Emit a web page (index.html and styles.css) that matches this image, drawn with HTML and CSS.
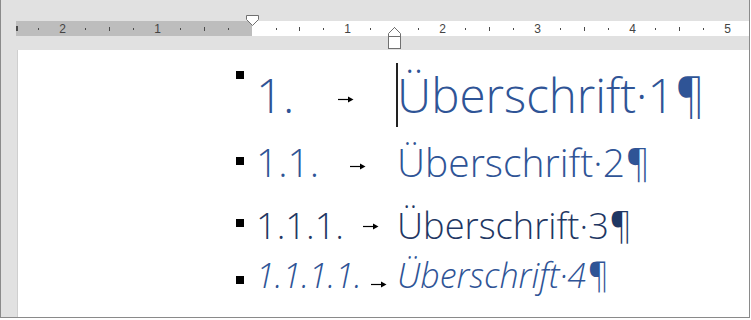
FILE: index.html
```html
<!DOCTYPE html>
<html lang="de">
<head>
<meta charset="UTF-8">
<title>Überschriften</title>
<link rel="stylesheet" href="styles.css">
</head>
<body>
<div class="window">
  <div class="topbar">
    <div class="ruler">
      <svg width="733" height="15" viewBox="0 0 733 15">
        <rect x="0" y="0" width="236" height="15" fill="#bdbdbd"/>
        <rect x="236" y="0" width="497" height="15" fill="#ffffff"/>
        <g fill="#4a4a4a">
          <rect x="0" y="5" width="2" height="5"/>
          <rect x="22" y="7" width="1" height="2"/>
          <rect x="69" y="7" width="1" height="2"/>
          <rect x="93" y="6" width="1" height="4"/>
          <rect x="117" y="7" width="1" height="2"/>
          <rect x="164" y="7" width="1" height="2"/>
          <rect x="188" y="6" width="1" height="4"/>
          <rect x="212" y="7" width="1" height="2"/>
          <rect x="260" y="7" width="1" height="2"/>
          <rect x="283" y="6" width="1" height="4"/>
          <rect x="307" y="7" width="1" height="2"/>
          <rect x="354" y="7" width="1" height="2"/>
          <rect x="378" y="6" width="1" height="4"/>
          <rect x="402" y="7" width="1" height="2"/>
          <rect x="449" y="7" width="1" height="2"/>
          <rect x="473" y="6" width="1" height="4"/>
          <rect x="497" y="7" width="1" height="2"/>
          <rect x="544" y="7" width="1" height="2"/>
          <rect x="568" y="6" width="1" height="4"/>
          <rect x="592" y="7" width="1" height="2"/>
          <rect x="639" y="7" width="1" height="2"/>
          <rect x="663" y="6" width="1" height="4"/>
          <rect x="687" y="7" width="1" height="2"/>
        </g>
        <g class="ruler-num" text-anchor="middle">
          <text x="46.5" y="12">2</text>
          <text x="141.5" y="12">1</text>
          <text x="331.5" y="12">1</text>
          <text x="426.5" y="12">2</text>
          <text x="521.5" y="12">3</text>
          <text x="616.5" y="12">4</text>
          <text x="711.5" y="12">5</text>
        </g>
      </svg>
    </div>
    <svg class="markers" width="748" height="50" viewBox="0 0 748 50">
      <path d="M245.5 15.5 H257.5 V19.5 L251.5 25.5 L245.5 19.5 Z" fill="#fff" stroke="#707070"/>
      <path d="M393.5 27.5 L399.5 33.5 V36.5 H387.5 V33.5 Z" fill="#fff" stroke="#707070"/>
      <rect x="387.5" y="36.5" width="12" height="12" fill="#fff" stroke="#707070"/>
    </svg>
  </div>

  <div class="page">
    <div class="heading h1">
      <span class="sq"></span>
      <span class="num">1.<span class="tab"><svg width="16" height="7" viewBox="0 0 16 7"><path d="M0 3.5 H11" stroke="#000" stroke-width="1.2"/><path d="M10 0.5 L15.5 3.5 L10 6.5 Z" fill="#000"/></svg></span></span>
      <span class="txt caret">Überschrift·1¶</span>
    </div>
    <div class="heading h2">
      <span class="sq"></span>
      <span class="num">1.1.<span class="tab"><svg width="16" height="7" viewBox="0 0 16 7"><path d="M0 3.5 H11" stroke="#000" stroke-width="1.2"/><path d="M10 0.5 L15.5 3.5 L10 6.5 Z" fill="#000"/></svg></span></span>
      <span class="txt">Überschrift·2¶</span>
    </div>
    <div class="heading h3">
      <span class="sq"></span>
      <span class="num">1.1.1.<span class="tab"><svg width="16" height="7" viewBox="0 0 16 7"><path d="M0 3.5 H11" stroke="#000" stroke-width="1.2"/><path d="M10 0.5 L15.5 3.5 L10 6.5 Z" fill="#000"/></svg></span></span>
      <span class="txt">Überschrift·3¶</span>
    </div>
    <div class="heading h4">
      <span class="sq"></span>
      <span class="num">1.1.1.1.<span class="tab"><svg width="16" height="7" viewBox="0 0 16 7"><path d="M0 3.5 H11" stroke="#000" stroke-width="1.2"/><path d="M10 0.5 L15.5 3.5 L10 6.5 Z" fill="#000"/></svg></span></span>
      <span class="txt">Überschrift·4¶</span>
    </div>
  </div>
</div>
</body>
</html>
```

FILE: styles.css
```css
body {
  margin: 0;
  padding: 0;
  background-color: #ffffff;
  font-family: "Open Sans", "Noto Sans", "Liberation Sans", sans-serif;
}

.window {
  width: 748px;
  height: 317px;
  border: 1px solid #8a8a8a;
  border-top: none;
  background-color: #e1e1e1;
  display: flex;
  flex-direction: column;
  overflow: hidden;
}

.topbar {
  position: relative;
  height: 50px;
  flex-shrink: 0;
}

.ruler {
  margin: 21px 0 0 15px;
  height: 15px;
}

.ruler svg {
  display: block;
}

.ruler-num {
  font-family: "Liberation Sans", Arial, sans-serif;
  font-size: 12px;
  fill: #444444;
}

.markers {
  position: absolute;
  left: 0;
  top: 0;
}

.page {
  flex: 1;
  margin-left: 16px;
  border-left: 1px solid #cfcfcf;
  background-color: #ffffff;
  padding: 13px 0 0 218px;
}

.heading {
  display: flex;
  align-items: baseline;
  color: #2f5496;
  font-weight: 300;
  white-space: nowrap;
}

.sq {
  align-self: flex-start;
  width: 8px;
  height: 8px;
  background-color: #000000;
  margin-right: 12px;
  flex-shrink: 0;
}

.num {
  display: flex;
  align-items: baseline;
  width: 141px;
  flex-shrink: 0;
}

.tab {
  flex: 1;
  text-align: center;
}

.tab svg {
  display: inline-block;
}

.txt {
  position: relative;
}

.caret::before {
  content: "";
  position: absolute;
  left: -1px;
  top: 0;
  bottom: 0;
  border-left: 2px solid #222222;
}

.h1 {
  font-size: 47.5px;
  line-height: 64px;
}

.h1 .sq {
  margin-top: 8px;
}

.h1 .tab svg {
  vertical-align: 10px;
}

.h2 {
  font-size: 39px;
  line-height: 50px;
  margin-top: 10px;
}

.h2 .sq {
  margin-top: 20px;
}

.h2 .tab svg {
  vertical-align: 7px;
}

.h3 {
  font-size: 36.25px;
  line-height: 46px;
  color: #1f3763;
  margin-top: 15px;
}

.h3 .sq {
  margin-top: 17px;
}

.h3 .tab svg {
  vertical-align: 9px;
}

.h4 {
  font-size: 34px;
  line-height: 42px;
  font-style: italic;
  margin-top: 6px;
}

.h4 .sq {
  margin-top: 22px;
}

.h4 .tab svg {
  vertical-align: 0;
}
```
